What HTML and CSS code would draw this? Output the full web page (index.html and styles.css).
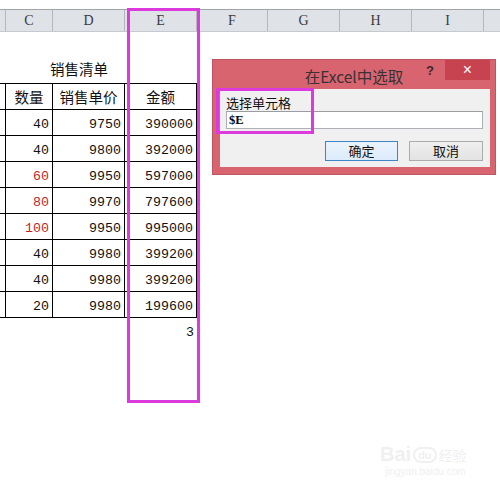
FILE: index.html
```html
<!DOCTYPE html>
<html lang="zh">
<head>
<meta charset="utf-8">
<link rel="stylesheet" href="styles.css">
</head>
<body>
<div class="sheet">
  <div class="colhdr">
    <div class="ch cb"></div>
    <div class="ch cc">C</div>
    <div class="ch cd">D</div>
    <div class="ch ce">E</div>
    <div class="ch cf">F</div>
    <div class="ch cg">G</div>
    <div class="ch ch2">H</div>
    <div class="ch ci">I</div>
    <div class="ch cj"></div>
  </div>
  <div class="title">销售清单</div>
  <div class="tbl">
    <div class="c"></div><div class="c hd">数量</div><div class="c hd">销售单价</div><div class="c hd">金额</div>
    <div class="c"></div><div class="c n">40</div><div class="c n">9750</div><div class="c n">390000</div>
    <div class="c"></div><div class="c n">40</div><div class="c n">9800</div><div class="c n">392000</div>
    <div class="c"></div><div class="c n red">60</div><div class="c n">9950</div><div class="c n">597000</div>
    <div class="c"></div><div class="c n red">80</div><div class="c n">9970</div><div class="c n">797600</div>
    <div class="c"></div><div class="c n red">100</div><div class="c n">9950</div><div class="c n">995000</div>
    <div class="c"></div><div class="c n">40</div><div class="c n">9980</div><div class="c n">399200</div>
    <div class="c"></div><div class="c n">40</div><div class="c n">9980</div><div class="c n">399200</div>
    <div class="c"></div><div class="c n">20</div><div class="c n">9980</div><div class="c n">199600</div>
    <div class="c nb"></div><div class="c nb"></div><div class="c nb"></div><div class="c n nb">3</div>
  </div>
  <div class="mark-col"></div>

  <div class="dlg">
    <div class="dlg-title">
      <span class="dlg-name">在Excel中选取</span>
      <span class="dlg-help">?</span>
      <span class="dlg-close">×</span>
    </div>
    <div class="dlg-body">
      <div class="lbl">选择单元格</div>
      <div class="inp">$E</div>
      <div class="btns">
        <div class="btn btn-ok">确定</div>
        <div class="btn">取消</div>
      </div>
    </div>
    <div class="mark-lbl"></div>
  </div>

  <div class="wm">
    <div class="wm-top"><span class="wm-bai">Bai</span><span class="wm-du">du</span><span class="wm-jy">经验</span></div>
    <div class="wm-url">jingyan.baidu.com</div>
  </div>
</div>
</body>
</html>
```

FILE: styles.css
```css
html, body {
  margin: 0;
  padding: 0;
  background: #ffffff;
}
body {
  width: 500px;
  height: 499px;
  overflow: hidden;
  font-family: "Noto Sans CJK SC", "Noto Sans", sans-serif;
}
.sheet {
  position: relative;
  width: 500px;
  height: 499px;
  padding-top: 9px;
  box-sizing: border-box;
}
.colhdr {
  display: flex;
  height: 23px;
  box-sizing: border-box;
  border-top: 1px solid #a2a4a7;
  border-bottom: 1px solid #c6c9cd;
  background: #dfe2e6;
}
.ch {
  box-sizing: border-box;
  border-right: 1px solid #b4b8bd;
  font-family: "Liberation Serif", "DejaVu Serif", serif;
  font-size: 14px;
  color: #3a3a3a;
  line-height: 21px;
  text-align: center;
  flex: none;
}
.cb { width: 6px; }
.cc { width: 47px; }
.cd { width: 72px; }
.ce { width: 72px; }
.cf { width: 71px; }
.cg { width: 72px; }
.ch2 { width: 72px; }
.ci { width: 72px; }
.cj { flex: 1; border-right: none; }

.title {
  height: 51px;
  box-sizing: border-box;
  padding-left: 50px;
  padding-top: 28px;
  font-size: 14.5px;
  line-height: 18px;
  color: #111;
}
.tbl {
  display: grid;
  grid-template-columns: 6px 47px 72px 72px;
  grid-auto-rows: 26px;
  width: 197px;
  border-top: 1px solid #000;
}
.c {
  box-sizing: border-box;
  border-right: 1px solid #000;
  border-bottom: 1px solid #000;
  display: flex;
  align-items: center;
}
.hd {
  justify-content: center;
  font-size: 14.5px;
  color: #111;
  line-height: 18px;
}
.n {
  justify-content: flex-end;
  padding-right: 3px;
  padding-top: 3px;
  font-family: "Liberation Mono", "DejaVu Sans Mono", monospace;
  font-size: 13.3px;
  color: #111;
}
.red { color: #c41f2b; }
.nb { border: none; }

.mark-col {
  position: absolute;
  left: 127px;
  top: 8px;
  width: 73px;
  height: 395px;
  box-sizing: border-box;
  border: 3px solid #dc3adc;
}

.dlg {
  position: absolute;
  left: 212px;
  top: 59px;
  width: 284px;
  height: 116px;
  box-sizing: border-box;
  border: 1px solid #bf5561;
  background: #d8646f;
  display: flex;
  flex-direction: column;
}
.dlg-title {
  position: relative;
  height: 29px;
  flex: none;
  display: flex;
  justify-content: center;
  align-items: center;
}
.dlg-name {
  font-size: 15.5px;
  line-height: 20px;
  color: #3b3033;
  padding-top: 2px;
}
.dlg-help {
  position: absolute;
  left: 213px;
  top: 3px;
  font-family: "Liberation Sans", sans-serif;
  font-weight: bold;
  font-size: 13px;
  color: #3a2a2c;
}
.dlg-close {
  position: absolute;
  left: 232px;
  top: 0;
  width: 45px;
  height: 20px;
  background: #c6434f;
  color: #ffffff;
  font-family: "Liberation Sans", sans-serif;
  font-size: 16px;
  line-height: 19px;
  text-align: center;
}
.dlg-body {
  margin: 0 5px 0 7px;
  height: 78px;
  background: #f0f0f0;
  box-sizing: border-box;
  padding: 6px 6px 0 6px;
  display: flex;
  flex-direction: column;
}
.lbl {
  font-size: 13px;
  line-height: 16px;
  color: #111;
  height: 16px;
}
.inp {
  margin-top: 0;
  height: 18px;
  width: 257px;
  box-sizing: border-box;
  border: 1px solid #adb0b5;
  border-top-color: #9a9ca0;
  background: #fff;
  font-family: "Liberation Serif", serif;
  font-weight: bold;
  font-size: 12.5px;
  line-height: 16px;
  padding-left: 2px;
  color: #000;
}
.btns {
  display: flex;
  justify-content: flex-end;
  gap: 11px;
  margin-top: 12px;
  padding-right: 0;
  width: 257px;
}
.btn {
  width: 74px;
  height: 20px;
  box-sizing: border-box;
  border: 1px solid #acacac;
  background: linear-gradient(#efefef, #e3e3e3);
  font-size: 13px;
  line-height: 18px;
  text-align: center;
  color: #111;
}
.btn-ok {
  border-color: #3d85c6;
  background: linear-gradient(#eaf3fb, #dcecfc);
  width: 73px;
}
.mark-lbl {
  position: absolute;
  left: 3px;
  top: 28px;
  width: 98px;
  height: 46px;
  box-sizing: border-box;
  border: 3px solid #dc3adc;
}

.wm {
  position: absolute;
  left: 380px;
  top: 443px;
  color: #f0f0f0;
  font-family: "Liberation Sans", sans-serif;
}
.wm-top {
  display: flex;
  align-items: center;
  gap: 2px;
}
.wm-bai { font-size: 20px; font-weight: bold; }
.wm-du {
  font-size: 11px;
  font-weight: bold;
  border: 2px solid #f0f0f0;
  border-radius: 10px;
  padding: 0 3px;
}
.wm-jy { font-family: "Noto Sans CJK SC", sans-serif; font-size: 14px; }
.wm-url { font-size: 10px; padding-left: 5px; }
```
